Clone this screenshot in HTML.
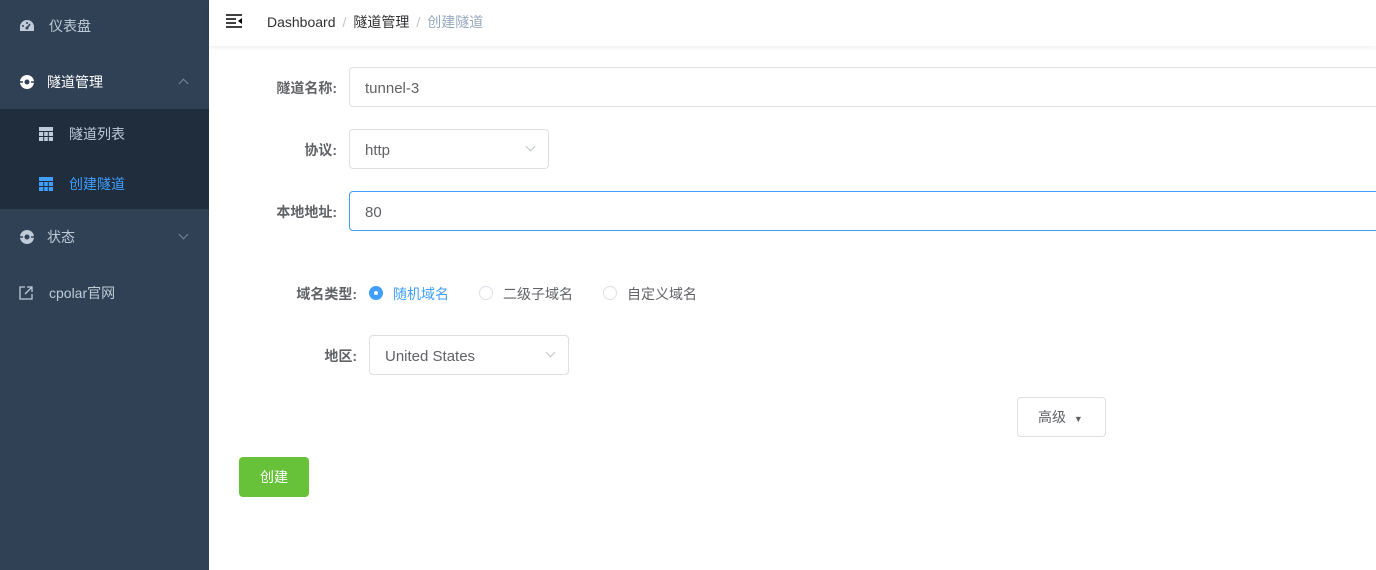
<!DOCTYPE html>
<html><head><meta charset="utf-8"><style>
*{margin:0;padding:0;box-sizing:border-box}
body{width:1376px;height:570px;overflow:hidden;font-family:"Liberation Sans","Noto Sans CJK SC",sans-serif;background:#fff;position:relative}
.sb{position:absolute;left:0;top:0;width:209px;height:570px;background:#304156}
.mi{position:absolute;left:0;width:209px;height:56px;color:#bfcbd9;font-size:14px;display:flex;align-items:center}
.mi .ic{position:absolute;left:19px}
.mi span.t{position:absolute;left:48px}
.sub{position:absolute;left:0;top:109px;width:209px;height:100px;background:#1f2d3d}
.si{position:absolute;left:0;width:209px;height:50px;font-size:14px;display:flex;align-items:center}
.hd{position:absolute;left:209px;top:0;right:0;height:46px;box-shadow:0 1px 4px rgba(0,21,41,.08);background:#fff}
.bc{position:absolute;left:267px;top:12px;font-size:14px;color:#303133}
.bc .s{color:#c0c4cc;margin:0 7px}
.lb{position:absolute;font-size:14px;color:#606266;font-weight:bold;text-align:right}
.in{position:absolute;border:1px solid #dcdfe6;border-radius:4px;height:40px;font-size:15px;color:#606266;padding-left:15px;padding-top:2px;line-height:38px}
.rad{position:absolute;top:286px;width:14px;height:14px;border:1px solid #dcdfe6;border-radius:50%}
.rt{position:absolute;top:284px;font-size:14px;color:#606266}
.chev{position:absolute;width:7px;height:7px;border-right:1px solid #c0c4cc;border-bottom:1px solid #c0c4cc;transform:rotate(45deg)}
</style></head><body>
<div class="sb">
 <div class="mi" style="top:0;height:52px"><svg class="ic" width="16" height="14" viewBox="0 0 16 14"><path d="M8 1a7 7 0 0 0-7 7v4h14V8a7 7 0 0 0-7-7z" fill="#bfcbd9"/><circle cx="8" cy="9" r="1.5" fill="#304156"/><path d="M8 9l3-4" stroke="#304156" stroke-width="1.5"/><circle cx="4" cy="7" r="1" fill="#304156"/><circle cx="8" cy="4" r="1" fill="#304156"/></svg><span class="t" style="left:49px">仪表盘</span></div>
 <div class="mi" style="top:54px;color:#fff"><svg class="ic" width="16" height="16" viewBox="0 0 16 16"><circle cx="8" cy="8" r="7" fill="#fff"/><circle cx="8" cy="8" r="2.5" fill="#304156"/><path d="M1 8h3M12 8h3" stroke="#304156" stroke-width="1.5"/></svg><span class="t" style="left:47px">隧道管理</span><div class="chev" style="left:180px;top:26px;transform:rotate(225deg);border-color:#7a8797"></div></div>
 <div class="sub">
  <div class="si" style="top:0;color:#bfcbd9"><svg style="position:absolute;left:39px" width="14" height="14"><rect width="14" height="14" fill="#bfcbd9"/><path d="M0 4.5h14M4.7 4.5v10M9.3 4.5v10M0 9.5h14" stroke="#1f2d3d"/></svg><span style="position:absolute;left:69px">隧道列表</span></div>
  <div class="si" style="top:50px;color:#409eff"><svg style="position:absolute;left:39px" width="14" height="14"><rect width="14" height="14" fill="#409eff"/><path d="M0 4.5h14M4.7 4.5v10M9.3 4.5v10M0 9.5h14" stroke="#1f2d3d"/></svg><span style="position:absolute;left:69px">创建隧道</span></div>
 </div>
 <div class="mi" style="top:209px"><svg class="ic" width="16" height="16" viewBox="0 0 16 16"><circle cx="8" cy="8" r="7" fill="#bfcbd9"/><circle cx="8" cy="8" r="2.5" fill="#304156"/><path d="M1 8h3M12 8h3" stroke="#304156" stroke-width="1.5"/></svg><span class="t" style="left:47px">状态</span><div class="chev" style="left:180px;top:22px;border-color:#7a8797"></div></div>
 <div class="mi" style="top:265px"><svg class="ic" width="14" height="14" viewBox="0 0 14 14"><path d="M6 1H1v12h12V8M8 1h5v5M13 1L6 8" stroke="#bfcbd9" stroke-width="1.3" fill="none"/></svg><span class="t" style="left:49px">cpolar官网</span></div>
</div>
<div class="hd"><svg style="position:absolute;left:17px;top:14px" width="17" height="14"><path d="M0 1h16M0 5h10M0 9h10M0 13h16" stroke="#000" stroke-width="1.6"/><path d="M16 4v6l-4-3z" fill="#000"/></svg></div>
<div class="bc">Dashboard<span class="s">/</span><span style="color:#303133">隧道管理</span><span class="s">/</span><span style="color:#97a8be">创建隧道</span></div>
<div class="lb" style="left:240px;width:97px;top:78px">隧道名称:</div>
<div class="in" style="left:349px;top:67px;width:1040px">tunnel-3</div>
<div class="lb" style="left:240px;width:97px;top:140px">协议:</div>
<div class="in" style="left:349px;top:129px;width:200px">http</div><div class="chev" style="left:527px;top:143px"></div>
<div class="lb" style="left:240px;width:97px;top:202px">本地地址:</div>
<div class="in" style="left:349px;top:191px;width:1040px;border-color:#409eff">80</div>
<div class="lb" style="left:250px;width:107px;top:284px">域名类型:</div>
<div class="rad" style="left:369px;background:#409eff;border-color:#409eff"><div style="width:4px;height:4px;background:#fff;border-radius:50%;margin:4px"></div></div><div class="rt" style="left:393px;color:#409eff">随机域名</div>
<div class="rad" style="left:479px"></div><div class="rt" style="left:503px">二级子域名</div>
<div class="rad" style="left:603px"></div><div class="rt" style="left:627px">自定义域名</div>
<div class="lb" style="left:250px;width:107px;top:346px">地区:</div>
<div class="in" style="left:369px;top:335px;width:200px">United States</div><div class="chev" style="left:547px;top:349px"></div>
<div class="in" style="left:1017px;top:397px;width:89px;padding-left:20px;padding-top:0;color:#606266;font-size:14px">高级 <span style="font-size:9px;margin-left:4px">▼</span></div>
<div style="position:absolute;left:239px;top:457px;width:70px;height:40px;background:#67c23a;border-radius:4px;color:#fff;font-size:14px;text-align:center;line-height:40px">创建</div>
</body></html>
